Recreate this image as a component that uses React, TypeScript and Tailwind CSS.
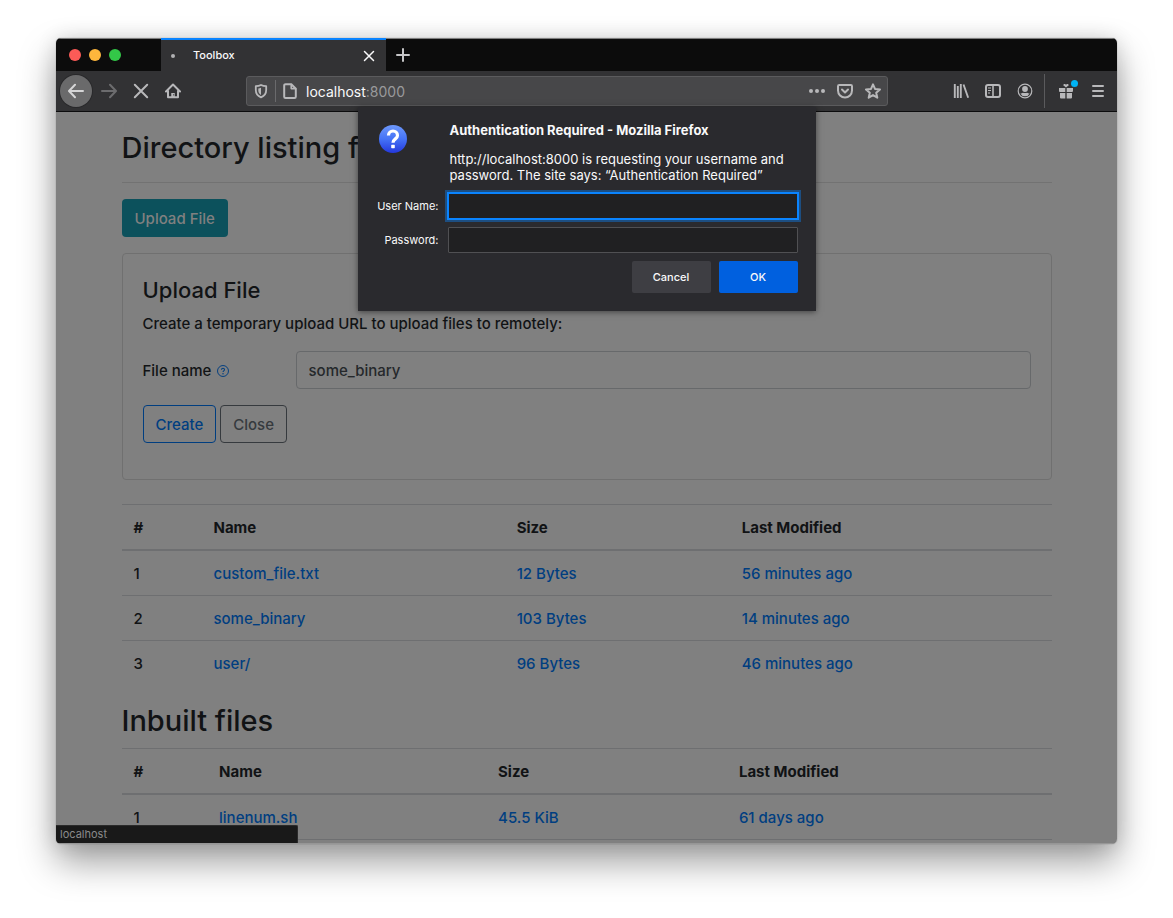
import type { ReactNode } from "react";

type FileRow = { name: string; size: string; modified: string };

const uploads: FileRow[] = [
  { name: "custom_file.txt", size: "12 Bytes", modified: "56 minutes ago" },
  { name: "some_binary", size: "103 Bytes", modified: "14 minutes ago" },
  { name: "user/", size: "96 Bytes", modified: "46 minutes ago" },
];

const inbuilt: FileRow[] = [
  { name: "linenum.sh", size: "45.5 KiB", modified: "61 days ago" },
];

function Icon({ children, className = "size-4" }: { children: ReactNode; className?: string }) {
  return (
    <svg
      viewBox="0 0 16 16"
      className={`${className} shrink-0`}
      fill="none"
      stroke="currentColor"
      strokeWidth="2"
      strokeLinecap="round"
      strokeLinejoin="round"
      aria-hidden="true"
    >
      {children}
    </svg>
  );
}

function ToolButton({ label, children }: { label: string; children: ReactNode }) {
  return (
    <button type="button" aria-label={label} className="flex size-8 shrink-0 items-center justify-center">
      {children}
    </button>
  );
}

function TabStrip() {
  return (
    <div className="flex h-[33px] shrink-0 border-t border-[#7d7d7d] bg-[#0c0c0c]">
      <div className="flex w-[105px] shrink-0 items-center gap-2 pl-[13px]">
        <button type="button" aria-label="Close window" className="size-3 rounded-full bg-[#fc5b57]" />
        <button type="button" aria-label="Minimize window" className="size-3 rounded-full bg-[#fdb63c]" />
        <button type="button" aria-label="Zoom window" className="size-3 rounded-full bg-[#33c748]" />
      </div>
      <div className="-mt-px flex w-[225px] items-center border-t-2 border-[#0a84ff] bg-[#323234] pr-[9px] pl-2.5 text-[#f9f9fa]">
        <span className="mr-[18px] size-1 rounded-full bg-[#b1b1b3]" />
        <span className="flex-1 text-[11px] font-medium">Toolbox</span>
        <button type="button" aria-label="Close tab" className="flex size-4 items-center justify-center">
          <Icon className="size-3">
            <path d="M2 2l12 12M14 2L2 14" />
          </Icon>
        </button>
      </div>
      <button type="button" aria-label="New tab" className="flex w-[34px] items-center justify-center text-[#c6c6c8]">
        <Icon>
          <path d="M8 2v12M2 8h12" />
        </Icon>
      </button>
    </div>
  );
}

function Toolbar() {
  return (
    <div className="flex h-[41px] shrink-0 items-center border-b border-[#0c0c0d] bg-[#323234] pr-[3px] pl-1 text-[#b8b8ba]">
      <button
        type="button"
        aria-label="Back"
        className="mr-px flex size-8 items-center justify-center rounded-full bg-[#6a6a6b] text-[#d5d5d6] ring-1 ring-[#29292b]"
      >
        <Icon>
          <path d="M15 8H1.5M7 1.8L1 8l6 6.2" />
        </Icon>
      </button>
      <button type="button" aria-label="Forward" className="flex size-8 items-center justify-center text-[#6c6c6e]">
        <Icon>
          <path d="M1 8h13.5M9 1.8L15 8l-6 6.2" />
        </Icon>
      </button>
      <ToolButton label="Stop">
        <Icon>
          <path d="M1.8 1.8l12.4 12.4M14.2 1.8L1.8 14.2" />
        </Icon>
      </ToolButton>
      <ToolButton label="Home">
        <Icon>
          <path d="M1 8.5L8 1.500l7 7M3 8v6.200h10V8" />
          <path d="M8 10v4" strokeWidth="3.5" strokeLinecap="butt" />
          <circle cx="8.6" cy="11.8" r=".6" fill="#323234" stroke="none" />
        </Icon>
      </ToolButton>

      <div className="mx-[57px] flex h-[30px] min-w-0 flex-1 items-center rounded-[3px] border border-[#5b5b5d] bg-[#474749]">
        <button type="button" aria-label="Tracking protection" className="flex h-full w-[28px] items-center justify-center">
          <Icon>
            <path d="M8 2C6.300 2.900 4.500 3.200 2.800 3.200v3.800c0 3.600 1.900 6 5.200 7.300 3.300-1.300 5.200-3.700 5.200-7.300V3.200C11.500 3.200 9.700 2.900 8 2z" strokeWidth="1.8" />
            <path d="M8 4.800c-.9.400-1.800.6-2.700.7v1.700c0 2.200.9 3.700 2.700 4.700z" fill="currentColor" stroke="none" />
          </Icon>
        </button>
        <span className="h-[22px] w-px bg-[#6a6a6c]" />
        <button type="button" aria-label="Site information" className="mr-2 ml-[6px] flex size-4 items-center justify-center">
          <Icon>
            <path d="M3.500 1.200h5.800L13.800 5.700v8a1.300 1.300 0 0 1-1.300 1.300h-9a1.300 1.300 0 0 1-1.300-1.300V2.500a1.300 1.300 0 0 1 1.300-1.300z" />
            <path d="M9.200 1.500V5.600h4.300" strokeWidth="1.6" />
          </Icon>
        </button>
        <p className="flex-1 pt-0.5 text-sm text-[#9a9a9c]">
          <span className="text-[#f9f9fa]">localhost</span>:8000
        </p>
        <div className="mr-[6px] flex items-center gap-3">
          <button type="button" aria-label="Page actions">
            <Icon>
              <g fill="currentColor" stroke="none">
                <circle cx="2" cy="8" r="2" />
                <circle cx="8" cy="8" r="2" />
                <circle cx="14" cy="8" r="2" />
              </g>
            </Icon>
          </button>
          <button type="button" aria-label="Save to Pocket">
            <Icon>
              <path d="M2.200 2h11.600c.7 0 1.200.5 1.200 1.200V7.500a7 7 0 0 1-14 0V3.200C1 2.500 1.500 2 2.200 2z" />
              <path d="M5 6.500l3 3 3-3" />
            </Icon>
          </button>
          <button type="button" aria-label="Bookmark this page">
            <Icon>
              <path d="M8 1.300l2 4.600 5 .5-3.800 3.300 1.100 5L8 12.100l-4.300 2.600 1.100-5L1 6.400l5-.5z" />
            </Icon>
          </button>
        </div>
      </div>

      <ToolButton label="Library">
        <Icon>
          <path d="M1.8 1v14M4.800 3v12M7.800 1v14M10.500 1.500L15.200 14.800" strokeLinecap="butt" strokeWidth="1.9" />
        </Icon>
      </ToolButton>
      <ToolButton label="Sidebars">
        <Icon>
          <rect x="1" y="2" width="14" height="12" rx="2" />
          <path d="M8 2v12" strokeWidth="1.6" />
          <path d="M3 5h3M3 7.500h3M3 10h2" strokeWidth="1" strokeLinecap="butt" />
        </Icon>
      </ToolButton>
      <ToolButton label="Account">
        <Icon>
          <circle cx="8" cy="8" r="6.8" strokeWidth="1.2" />
          <circle cx="8" cy="6" r="2.9" fill="currentColor" stroke="none" />
          <path d="M3.300 10.500c1 .2 1.500-.8 2.700-.8.700.5 3.300.5 4 0 1.200 0 1.700 1 2.700.8a5.300 5.300 0 0 1-9.400 0z" fill="currentColor" stroke="none" />
        </Icon>
      </ToolButton>
      <span className="mr-[5px] ml-[3px] h-[34px] w-px bg-[#5b5b5d]" />
      <button type="button" aria-label="What's new" className="relative flex size-8 items-center justify-center">
        <Icon>
          <g fill="currentColor" stroke="none">
            <path d="M1 5h6.300v4H2a1 1 0 0 1-1-1zM8.700 5H15v3a1 1 0 0 1-1 1H8.700z" />
            <path d="M2 10h5.300v5.500H3a1 1 0 0 1-1-1zM8.700 10H14v4.500a1 1 0 0 1-1 1H8.700z" />
            <path d="M8 4.500L5.200 2.200C5.500.6 7.500.5 8 1.700c.5-1.200 2.500-1.100 2.800.5z" />
          </g>
        </Icon>
        <span className="absolute top-[5px] right-1 size-[7px] rounded-full bg-[#00b3f4]" />
      </button>
      <ToolButton label="Menu">
        <Icon>
          <path d="M3 3h10M3 8h10M3 13h10" />
        </Icon>
      </ToolButton>
    </div>
  );
}

function FileTable({ rows, widths }: { rows: FileRow[]; widths: string[] }) {
  return (
    <table className="w-full table-fixed border-separate border-spacing-0 text-left">
      <colgroup>
        {widths.map((w, i) => (
          <col key={i} className={w} />
        ))}
      </colgroup>
      <thead>
        <tr>
          {["#", "Name", "Size", "Last Modified"].map((h) => (
            <th key={h} scope="col" className="border-t border-b-2 border-[#6e6f71] px-3 pt-[11px] pb-[9px] leading-6 font-bold">
              {h}
            </th>
          ))}
        </tr>
      </thead>
      <tbody className="[&>tr+tr>td]:border-t [&>tr>td]:border-[#6e6f71] [&>tr>td]:px-3 [&>tr>td]:pt-[11px] [&>tr>td]:pb-[9px] [&>tr>td]:leading-6">
        {rows.map((r, i) => (
          <tr key={r.name}>
            <td>{i + 1}</td>
            <td>
              <a href="#" className="text-[#003e80]">{r.name}</a>
            </td>
            <td>
              <a href="#" className="text-[#003e80]">{r.size}</a>
            </td>
            <td>
              <a href="#" className="text-[#003e80]">{r.modified}</a>
            </td>
          </tr>
        ))}
      </tbody>
    </table>
  );
}

function Page() {
  return (
    <main className="mx-auto max-w-[960px] px-[15px] pt-4 text-[15px] font-medium text-[#111315]">
      <h1 className="text-[29px] leading-10 font-medium">Directory listing for /</h1>
      <hr className="mt-3.5 mb-4 border-[#727272]" />
      <button type="button" className="h-[38px] rounded bg-[#0c515c] px-[13px] pt-0.5 text-[#808080]">
        Upload File
      </button>

      <section className="mt-4 rounded border border-[#707070] px-5 pt-5 pb-9">
        <h2 className="text-[22px] leading-8 font-medium">Upload File</h2>
        <p className="mt-1.5 leading-6">Create a temporary upload URL to upload files to remotely:</p>
        <div className="mt-[15px] flex items-center">
          <label htmlFor="file-name" className="flex w-[153px] shrink-0 items-center gap-1.5 pt-0.5">
            File name
            <svg viewBox="0 0 16 16" className="size-3 text-[#003e80]" fill="none" stroke="currentColor" aria-hidden="true">
              <circle cx="8" cy="8" r="7.3" strokeWidth="1.3" />
              <path d="M6 6.200c0-2.600 4-2.600 4 0 0 1.600-2 1.600-2 3.200" strokeWidth="1.4" />
              <circle cx="8" cy="11.6" r="1" fill="currentColor" stroke="none" />
            </svg>
          </label>
          <input
            id="file-name"
            type="text"
            defaultValue="some_binary"
            className="h-[38px] min-w-0 flex-1 rounded border border-[#67696b] bg-transparent px-3 text-[#25282b]"
          />
        </div>
        <div className="mt-4 flex gap-1">
          <button type="button" className="h-[38px] rounded border border-[#003e80] px-3 pt-0.5 text-[#003e80]">
            Create
          </button>
          <button type="button" className="h-[38px] rounded border border-[#363a3e] px-3 pt-0.5 text-[#363a3e]">
            Close
          </button>
        </div>
      </section>

      <div className="mt-6">
        <FileTable rows={uploads} widths={["w-[8.6%]", "w-[32.6%]", "w-[24.2%]", "w-auto"]} />
      </div>
      <h2 className="mt-4 mb-[7px] text-[29px] leading-10 font-medium">Inbuilt files</h2>
      <div className="border-b border-[#6e6f71]">
        <FileTable rows={inbuilt} widths={["w-[9.2%]", "w-[30%]", "w-[25.9%]", "w-auto"]} />
      </div>
    </main>
  );
}

function AuthDialog() {
  return (
    <form
      role="dialog"
      aria-labelledby="auth-title"
      className="-mt-[5px] w-[458px] bg-[#2a2a2e] pt-[18px] pr-[18px] pb-[18px] text-[#f9f9fa] shadow-[0_1px_6px_rgba(0,0,0,0.5)]"
    >
      <div className="flex">
        <div className="w-[92px] shrink-0 pl-[21px]">
          <svg viewBox="0 0 28 28" className="size-7" aria-hidden="true">
            <defs>
              <linearGradient id="orb" x1="0" y1="0" x2="0" y2="1">
                <stop offset="0" stopColor="#6d98fb" />
                <stop offset="0.5" stopColor="#4573f6" />
                <stop offset="1" stopColor="#2438dc" />
              </linearGradient>
            </defs>
            <circle cx="14" cy="14" r="14" fill="url(#orb)" />
            <path d="M9.500 10.500c0-6 9-6 9 0 0 3.500-4.500 3.300-4.500 7.300" fill="none" stroke="#fff" strokeWidth="3.2" />
            <rect x="12.2" y="19.8" width="3.6" height="3.4" rx=".6" fill="#fff" />
          </svg>
        </div>
        <div className="text-[13px] leading-4">
          <h2 id="auth-title" className="-mt-[3px] font-bold">Authentication Required - Mozilla Firefox</h2>
          <p className="mt-[13px]">
            http://localhost:8000 is requesting your username and password. The site says: “Authentication Required”
          </p>
        </div>
      </div>
      <div className="mt-2.5 grid grid-cols-[81px_1fr] items-center gap-x-[9px] gap-y-2 text-[11px]">
        <label htmlFor="user" className="text-right">User Name:</label>
        <input
          id="user"
          type="text"
          className="h-[26px] min-w-0 bg-[#202022] px-2 ring-[3px] ring-[#0a84ff]/40 outline-2 -outline-offset-1 outline-[#0a84ff]"
        />
        <label htmlFor="pass" className="text-right">Password:</label>
        <input id="pass" type="password" className="h-[26px] min-w-0 rounded-[1px] border border-[#505053] bg-[#202022] px-2" />
      </div>
      <div className="mt-2 flex justify-end gap-2 text-[11px] font-medium">
        <button type="button" className="h-8 w-[79px] rounded-[2px] bg-[#3e3e43]">Cancel</button>
        <button type="submit" className="h-8 w-[79px] rounded-[2px] bg-[#0060df]">OK</button>
      </div>
    </form>
  );
}

export default function App() {
  return (
    <div className="flex h-screen flex-col bg-white px-14 pt-[38px] pb-[74px] font-['Inter','Liberation_Sans',sans-serif]">
      <div className="flex min-h-0 flex-1 flex-col overflow-hidden rounded-[5px] shadow-[0_0_1px_rgba(0,0,0,0.5),0_0_20px_rgba(0,0,0,0.12),0_18px_36px_rgba(0,0,0,0.38)]">
        <TabStrip />
        <Toolbar />
        <div className="relative min-h-0 flex-1 border-b border-[#969696] bg-[#808080]">
          <Page />
          <div className="absolute inset-x-0 top-0 flex justify-center">
            <AuthDialog />
          </div>
          <div className="absolute bottom-0 left-0 flex h-[18px] w-[242px] items-center rounded-tr-[2px] border-t border-r border-[#2b2b2b] bg-[#191919] px-1 text-[11px] text-[#8a8a8b]">
            localhost
          </div>
        </div>
      </div>
    </div>
  );
}
